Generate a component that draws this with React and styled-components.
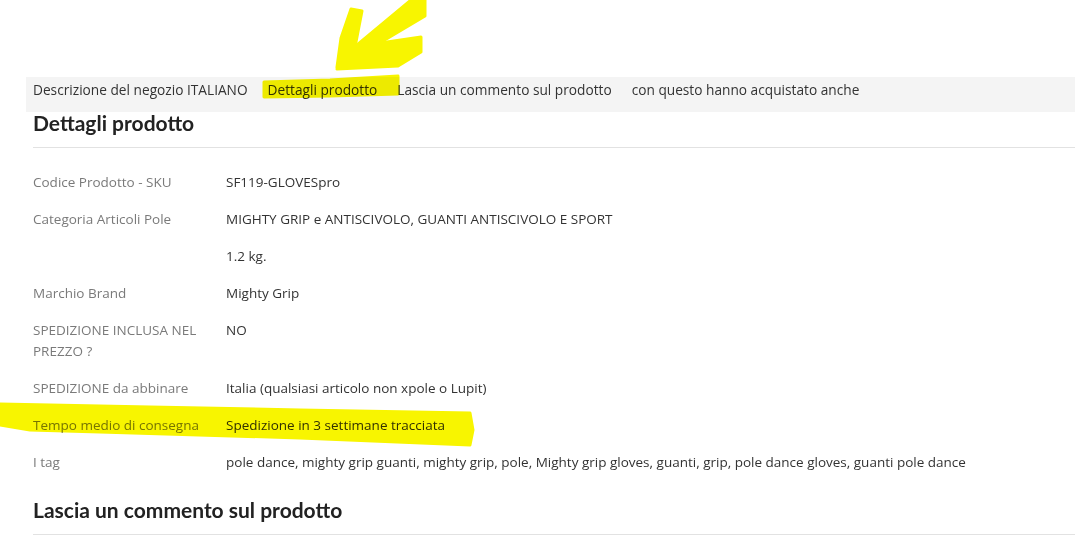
import React from 'react'
import styled, { createGlobalStyle } from 'styled-components'

const GlobalStyle = createGlobalStyle`
    html, body {
        margin:0;
        padding:0;
        background:#fff;
    }
    body {
        font-family:"Open Sans", "Liberation Sans", sans-serif;
        font-size:13.5px;
        color:#333;
    }
`

const details = [
    { label: 'Codice Prodotto - SKU', value: 'SF119-GLOVESpro' },
    { label: 'Categoria Articoli Pole', value: 'MIGHTY GRIP e ANTISCIVOLO, GUANTI ANTISCIVOLO E SPORT' },
    { label: '', value: '1.2 kg.' },
    { label: 'Marchio Brand', value: 'Mighty Grip' },
    { label: 'SPEDIZIONE INCLUSA NEL PREZZO ?', value: 'NO' },
    { label: 'SPEDIZIONE da abbinare', value: 'Italia (qualsiasi articolo non xpole o Lupit)' },
    { label: 'Tempo medio di consegna', value: 'Spedizione in 3 settimane tracciata' },
    { label: 'I tag', value: 'pole dance, mighty grip guanti, mighty grip, pole, Mighty grip gloves, guanti, grip, pole dance gloves, guanti pole dance' },
]

const tabs = [
    'Descrizione del negozio ITALIANO',
    'Dettagli prodotto',
    'Lascia un commento sul prodotto',
    'con questo hanno acquistato anche',
]

function App() {
    return (
        <Page>
            <GlobalStyle />
            <Content>
                <TabBar>
                    {tabs.map(t => <Tab key={t}>{t}</Tab>)}
                </TabBar>
                <Section>
                    <Heading>Dettagli prodotto</Heading>
                    <DetailList>
                        {details.map((d, i) => (
                            <DetailRow key={i}>
                                <Label>{d.label}</Label>
                                <Value>{d.value}</Value>
                            </DetailRow>
                        ))}
                    </DetailList>
                </Section>
                <Section $gap>
                    <Heading>Lascia un commento sul prodotto</Heading>
                </Section>
            </Content>

            {/* marker scribbles drawn over the screenshot */}
            <Marks viewBox="0 0 1075 535" width="1075" height="535">
                <g fill="#f8f500" stroke="#f8f500" strokeWidth="3" strokeLinejoin="round">
                    {/* arrow */}
                    <polygon points="351,9 362,11 356,42 351,60 337,67 341,38" />
                    <polygon points="339,60 411,0 425,0 425,16 356,57" />
                    <polygon points="337,69 398,66 421,52 421,37 360,46 340,55" />
                    {/* tab highlight */}
                    <polygon points="264,82 330,80 398,76 398,94 330,96 264,97" />
                    {/* row highlight */}
                    <polygon points="0,404 150,407 300,410 470,413 473,430 470,445 300,438 100,432 30,430 0,425" />
                </g>
            </Marks>
        </Page>
    )
}

export default App

const Page = styled.div`
    position:relative;
    width:1075px;
    height:535px;
    overflow:hidden;
`

const Content = styled.div`
    padding-top:77px;
    margin-left:26px;
`

const TabBar = styled.div`
    display:flex;
    gap:20px;
    background-color:#f4f4f4;
    padding:3px 7px 12px;
    line-height:20px;
`

const Tab = styled.span`
    color:#333;
    font-size:13.7px;
    white-space:nowrap;
`

const Section = styled.div`
    padding-left:7px;
    margin-top:${p => p.$gap ? '18px' : '0'};
`

const Heading = styled.h2`
    margin:0;
    font-family:Lato, "Open Sans", sans-serif;
    font-weight:700;
    font-size:21px;
    line-height:22px;
    color:#222;
    padding-bottom:13px;
    border-bottom:1px solid #e2e2e2;
`

const DetailList = styled.div`
    margin-top:16px;
    display:flex;
    flex-direction:column;
`

const DetailRow = styled.div`
    display:grid;
    grid-template-columns:193px 1fr;
    line-height:21px;
`

const Label = styled.div`
    padding:8px 13px 8px 0;
    color:#7a7a7a;
`

const Value = styled.div`
    padding:8px 0;
    color:#333;
`

const Marks = styled.svg`
    position:absolute;
    left:0;
    top:0;
    pointer-events:none;
    mix-blend-mode:multiply;
`
